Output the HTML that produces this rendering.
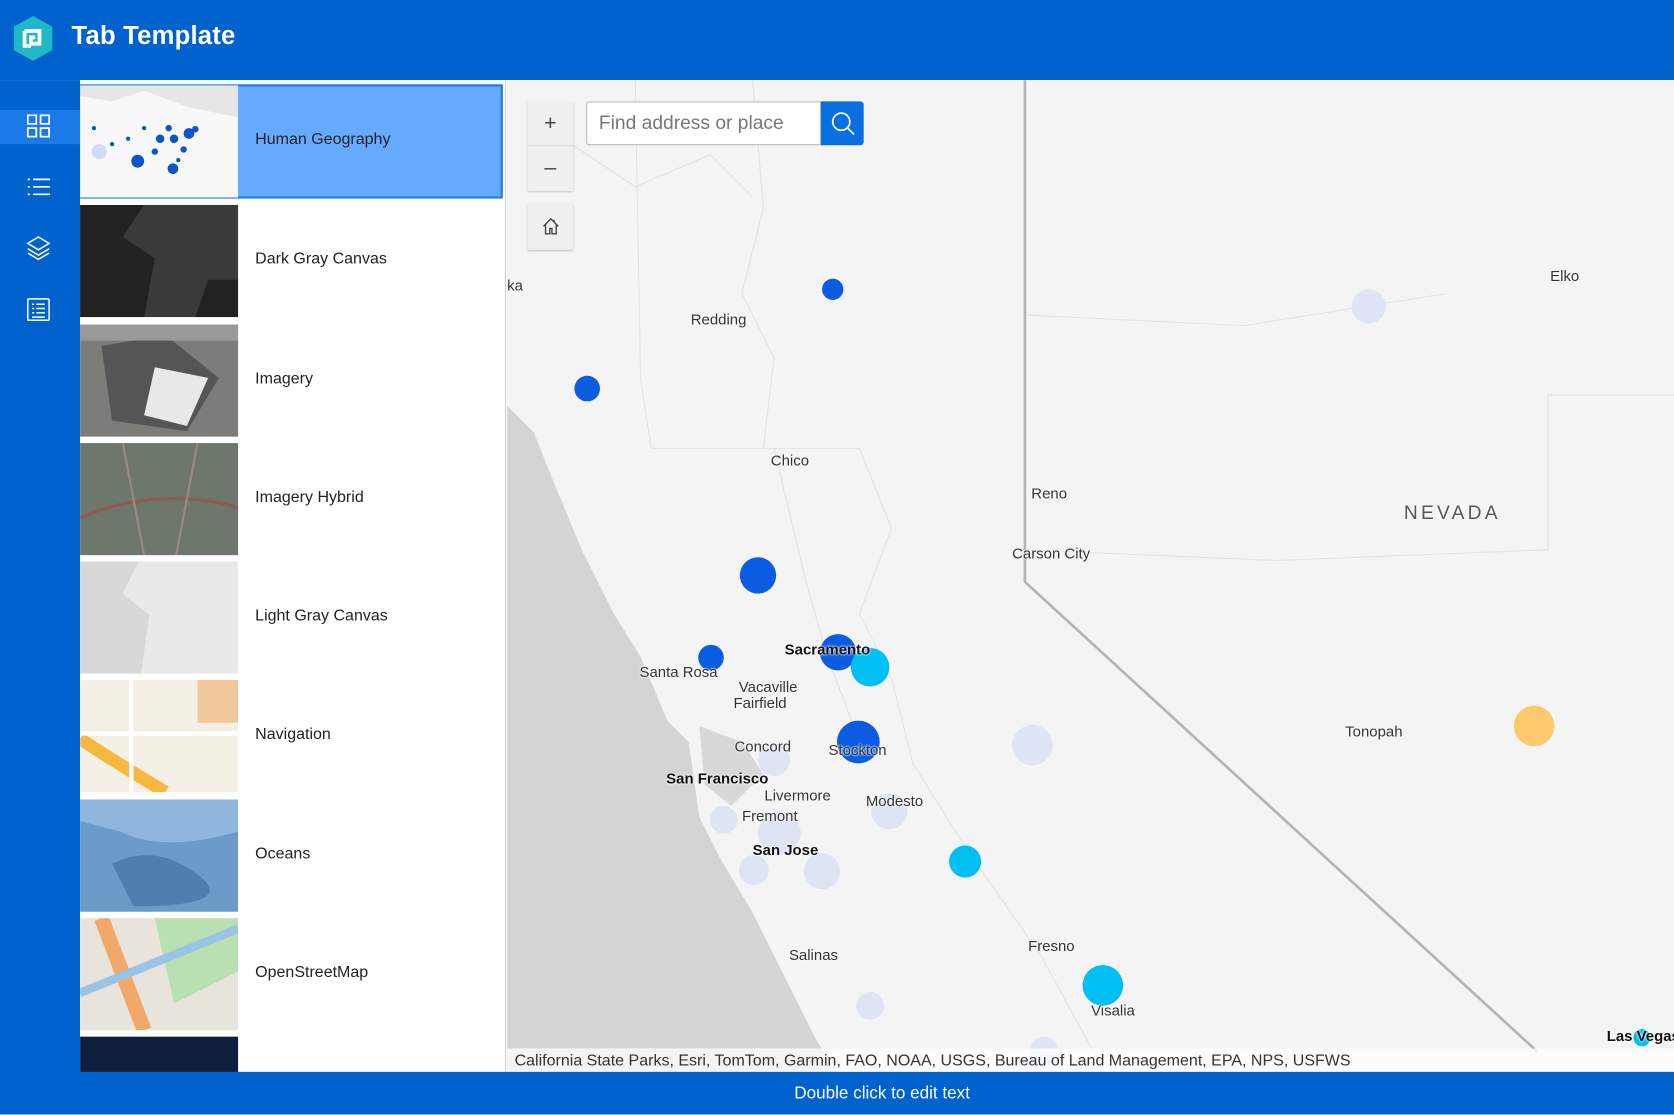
<!DOCTYPE html>
<html><head><meta charset="utf-8"><style>
*{margin:0;padding:0;box-sizing:border-box}
body{width:1674px;height:1114px;overflow:hidden;background:#fff;font-family:"Liberation Sans",sans-serif}
#w{position:absolute;left:0;top:0;width:1568px;height:1044px;transform:scale(1.06760);transform-origin:0 0;overflow:hidden}
.hdr{position:absolute;left:0;top:0;width:1568px;height:75px;background:#0062cc}
.hdr .t{position:absolute;left:67px;top:20px;color:#fff;font-size:24px;font-weight:bold;letter-spacing:.2px}
.rail{position:absolute;left:0;top:75px;width:75px;height:930px;background:#0062cc}
.rail .act{position:absolute;left:0;top:28px;width:75px;height:32px;background:#1a7ae8}
.panel{position:absolute;left:75px;top:75px;width:399px;height:930px;background:#fff;border-right:1px solid #ccc;overflow:hidden}
.item{position:absolute;left:0;width:395px;height:105px}
.item .th{position:absolute;left:0;top:0;width:148px;height:105px;overflow:hidden}
.item .lb{position:absolute;left:164px;top:42px;font-size:15px;color:#222}
.sel{background:#66aaff;outline:2px solid #1a7ae8;outline-offset:-1px}
.map{position:absolute;left:475px;top:75px;width:1093px;height:930px;background:#f4f4f4}
.ml{position:absolute;font-size:14px;color:#333;white-space:nowrap;text-shadow:0 0 2px #fff,0 0 2px #fff}
.b{font-weight:bold;color:#111}
.ftr{position:absolute;left:0;top:1004px;width:1568px;height:40px;background:#0062cc;color:#fff;font-size:16px;line-height:42px}
.zb{position:absolute;left:494px;width:43px;background:#f0f0f0;box-shadow:0 1px 2px rgba(0,0,0,.25);color:#444;text-align:center}
</style></head><body><div id="w">
<div class="hdr">
<svg style="position:absolute;left:11px;top:14px" width="40" height="44" viewBox="0 0 40 44"><polygon points="20,1 38,11 38,33 20,43 2,33 2,11" fill="#1fb8c8"/><path d="M12 15h14v12h-8v-6h4" fill="none" stroke="#fff" stroke-width="3.5"/><path d="M12 15v14h6" fill="none" stroke="#fff" stroke-width="3.5"/></svg>
<div class="t">Tab Template</div></div>
<div class="rail"><div class="act"></div>
<svg style="position:absolute;left:25px;top:32px" width="22" height="22" viewBox="0 0 22 22" fill="none" stroke="#fff" stroke-width="1.6"><rect x="1" y="1" width="8" height="8"/><rect x="13" y="1" width="8" height="8"/><rect x="1" y="13" width="8" height="8"/><rect x="13" y="13" width="8" height="8"/></svg>
<svg style="position:absolute;left:25px;top:91px" width="22" height="18" viewBox="0 0 22 18" stroke="#fff" stroke-width="1.6"><path d="M6 2h16M6 9h16M6 16h16M1 2h2M1 9h2M1 16h2"/></svg>
<svg style="position:absolute;left:24px;top:145px" width="24" height="24" viewBox="0 0 24 24" fill="none" stroke="#fff" stroke-width="1.4"><path d="M12 2l10 6-10 6-10-6z"/><path d="M2 13l10 6 10-6"/><path d="M2 17l10 6 10-6"/></svg>
<svg style="position:absolute;left:25px;top:204px" width="22" height="22" viewBox="0 0 22 22" fill="none" stroke="#fff" stroke-width="1.4"><rect x="1" y="1" width="20" height="20" rx="1"/><path d="M5 6h2M9 6h8M5 10h2M9 10h8M5 14h2M9 14h8M5 18h12"/></svg>
</div>
<div class="panel">
<div class="item sel" style="top:5px"><div class="th" style="background:#e6e6e6"><svg width="148" height="105"><path d="M0 10 L30 15 60 5 100 20 148 30 148 105 0 105z" fill="#f8f8f8"/><g fill="#0d55c6"><circle cx="54" cy="71" r="6"/><circle cx="87" cy="78" r="5"/><circle cx="75" cy="50" r="4"/><circle cx="88" cy="50" r="4"/><circle cx="102" cy="45" r="5"/><circle cx="97" cy="60" r="3"/><circle cx="60" cy="40" r="2"/><circle cx="45" cy="50" r="2"/><circle cx="70" cy="62" r="3"/><circle cx="83" cy="40" r="3"/><circle cx="108" cy="41" r="3"/><circle cx="13" cy="40" r="2"/><circle cx="30" cy="55" r="2"/><circle cx="92" cy="70" r="2"/></g><circle cx="18" cy="62" r="7" fill="#cfdcf5"/></svg></div><div class="lb">Human Geography</div></div>
<div class="item" style="top:117px"><div class="th" style="background:#3a3a3a"><svg width="148" height="105"><path d="M0 0h60l-20 30 30 20-10 55H0z" fill="#222"/><path d="M120 70l28 0v35h-40z" fill="#222"/></svg></div><div class="lb">Dark Gray Canvas</div></div>
<div class="item" style="top:229px"><div class="th" style="background:#7b7d78"><svg width="148" height="105"><path d="M20 20l60-10 50 40-30 50-70-10z" fill="#555"/><path d="M70 40l50 10-20 45-40-10z" fill="#e8e8e8"/><path d="M0 0h148v15H0z" fill="#999"/></svg></div><div class="lb">Imagery</div></div>
<div class="item" style="top:340px"><div class="th" style="background:#6e776c"><svg width="148" height="105"><path d="M0 70q70-30 148-10" stroke="#8a5d50" stroke-width="3" fill="none"/><path d="M40 0l20 105M110 0l-20 105" stroke="#9a8a80" stroke-width="2"/></svg></div><div class="lb">Imagery Hybrid</div></div>
<div class="item" style="top:451px"><div class="th" style="background:#e9e9e9"><svg width="148" height="105"><path d="M0 0h55l-15 30 25 20-8 55H0z" fill="#d8d8d8"/></svg></div><div class="lb">Light Gray Canvas</div></div>
<div class="item" style="top:562px"><div class="th" style="background:#f5f0e6"><svg width="148" height="105"><path d="M0 55q30 20 80 50" stroke="#f5b942" stroke-width="12" fill="none"/><path d="M0 50h148M48 0v105" stroke="#fff" stroke-width="4"/><path d="M110 0h38v40h-38z" fill="#f0c89a"/></svg></div><div class="lb">Navigation</div></div>
<div class="item" style="top:674px"><div class="th" style="background:#6b9bc9"><svg width="148" height="105"><path d="M0 0h148v30q-70 20-110 0L0 20z" fill="#8fb6dc"/><path d="M30 60q40-20 80 10t-60 30z" fill="#4f7fae"/></svg></div><div class="lb">Oceans</div></div>
<div class="item" style="top:785px"><div class="th" style="background:#e8e4dc"><svg width="148" height="105"><path d="M70 0h78v50l-60 30z" fill="#b9dfb2"/><path d="M20 0l40 105" stroke="#f2a868" stroke-width="14"/><path d="M0 70l148-60" stroke="#9ac4e6" stroke-width="8"/></svg></div><div class="lb">OpenStreetMap</div></div>
<div class="item" style="top:896px"><div class="th" style="background:#0f1f3c"></div></div>
</div>
<div class="map">
<svg width="1093" height="930" style="position:absolute;left:0;top:0">
<path d="M0 305 L25 330 45 380 70 440 100 500 125 540 150 600 170 620 180 690 200 730 230 780 260 840 290 900 310 930 0 930z" fill="#d4d4d4"/>
<path d="M180 605 L220 620 240 650 210 680 185 660z" fill="#d8d8d8"/>
<g fill="none" stroke="#e2e2e2" stroke-width="1"><path d="M120 0 L125 280 L135 345 L250 345 L330 345"/><path d="M230 0 L240 120 L220 200 L250 260 L240 345"/><path d="M60 60 L120 100 L190 70 L230 110"/><path d="M485 220 L690 230 L880 200"/><path d="M485 440 L720 450 L975 440 L975 295 L1093 295"/><path d="M330 345 L360 420 L330 500 L360 560 L380 640 L430 720 L500 820 L560 930"/><path d="M250 345 L280 470 L300 540 L330 620"/></g>
<path d="M485 0 V470 L965 910" stroke="#b4b4b4" stroke-width="2.5" fill="none"/>
<g fill="#0b5ce0"><circle cx="305" cy="196" r="10"/><circle cx="75" cy="289" r="12"/><circle cx="235" cy="464" r="17"/><circle cx="191" cy="541" r="12"/><circle cx="310" cy="536" r="17"/><circle cx="329" cy="620" r="20"/></g>
<g fill="#00bff2"><circle cx="340" cy="550" r="18"/><circle cx="429" cy="732" r="15"/><circle cx="558" cy="848" r="19"/><circle cx="1063" cy="897" r="8"/></g>
<circle cx="962" cy="605" r="19" fill="#fcc96c"/>
<g fill="#dde3f6" opacity=".9"><circle cx="807" cy="212" r="16"/><circle cx="492" cy="623" r="19"/><circle cx="358" cy="685" r="17"/><circle cx="295" cy="741" r="17"/><circle cx="231" cy="740" r="14"/><circle cx="340" cy="867" r="13"/><circle cx="250" cy="637" r="15"/><circle cx="203" cy="693" r="13"/><circle cx="255" cy="705" r="20"/><circle cx="503" cy="910" r="14"/></g>
</svg>
<div class="ml" style="left:0;top:184px">ka</div>
<div class="ml" style="left:172px;top:216px">Redding</div>
<div class="ml" style="left:247px;top:348px">Chico</div>
<div class="ml" style="left:491px;top:379px">Reno</div>
<div class="ml" style="left:473px;top:435px">Carson City</div>
<div class="ml" style="left:840px;top:395px;font-size:18px;letter-spacing:3px;color:#555">NEVADA</div>
<div class="ml" style="left:977px;top:175px">Elko</div>
<div class="ml b" style="left:260px;top:525px">Sacramento</div>
<div class="ml" style="left:124px;top:546px">Santa Rosa</div>
<div class="ml" style="left:217px;top:560px">Vacaville</div>
<div class="ml" style="left:212px;top:575px">Fairfield</div>
<div class="ml" style="left:213px;top:616px">Concord</div>
<div class="ml" style="left:301px;top:619px">Stockton</div>
<div class="ml b" style="left:149px;top:646px">San Francisco</div>
<div class="ml" style="left:241px;top:662px">Livermore</div>
<div class="ml" style="left:336px;top:667px">Modesto</div>
<div class="ml" style="left:220px;top:681px">Fremont</div>
<div class="ml b" style="left:230px;top:713px">San Jose</div>
<div class="ml" style="left:785px;top:602px">Tonopah</div>
<div class="ml" style="left:264px;top:811px">Salinas</div>
<div class="ml" style="left:488px;top:803px">Fresno</div>
<div class="ml" style="left:547px;top:863px">Visalia</div>
<div class="ml b" style="left:1030px;top:887px">Las Vegas</div>
<div style="position:absolute;left:0;top:907px;width:1093px;height:23px;background:rgba(255,255,255,.75);font-size:15px;color:#333;padding-left:7px;line-height:23px">California State Parks, Esri, TomTom, Garmin, FAO, NOAA, USGS, Bureau of Land Management, EPA, NPS, USFWS</div>
</div>
<div class="zb" style="top:95px;height:84px"><div style="height:42px;line-height:42px;font-size:20px;border-bottom:1px solid #ddd">+</div><div style="height:42px;line-height:40px;font-size:20px">&#8211;</div></div>
<div class="zb" style="top:191px;height:43px"><svg style="margin-top:12px" width="18" height="18" viewBox="0 0 18 18" fill="none" stroke="#444" stroke-width="1.3"><path d="M2 9L9 2l7 7M4 7v9h4v-5h2v5h4V7M12 3v2"/></svg></div>
<div style="position:absolute;left:549px;top:95px;width:220px;height:41px;background:#fff;border:1px solid #bbb;border-radius:3px 0 0 3px;font-size:18px;color:#777;line-height:39px;padding-left:11px">Find address or place</div>
<div style="position:absolute;left:769px;top:95px;width:40px;height:41px;background:#0a6fe0;border-radius:0 3px 3px 0"><svg style="margin:9px" width="23" height="23" viewBox="0 0 23 23" fill="none" stroke="#fff" stroke-width="1.6"><circle cx="10" cy="10" r="8"/><path d="M16 16l6 6"/></svg></div>
<div class="ftr"><span style="position:absolute;left:744px">Double click to edit text</span></div>
</div></body></html>
